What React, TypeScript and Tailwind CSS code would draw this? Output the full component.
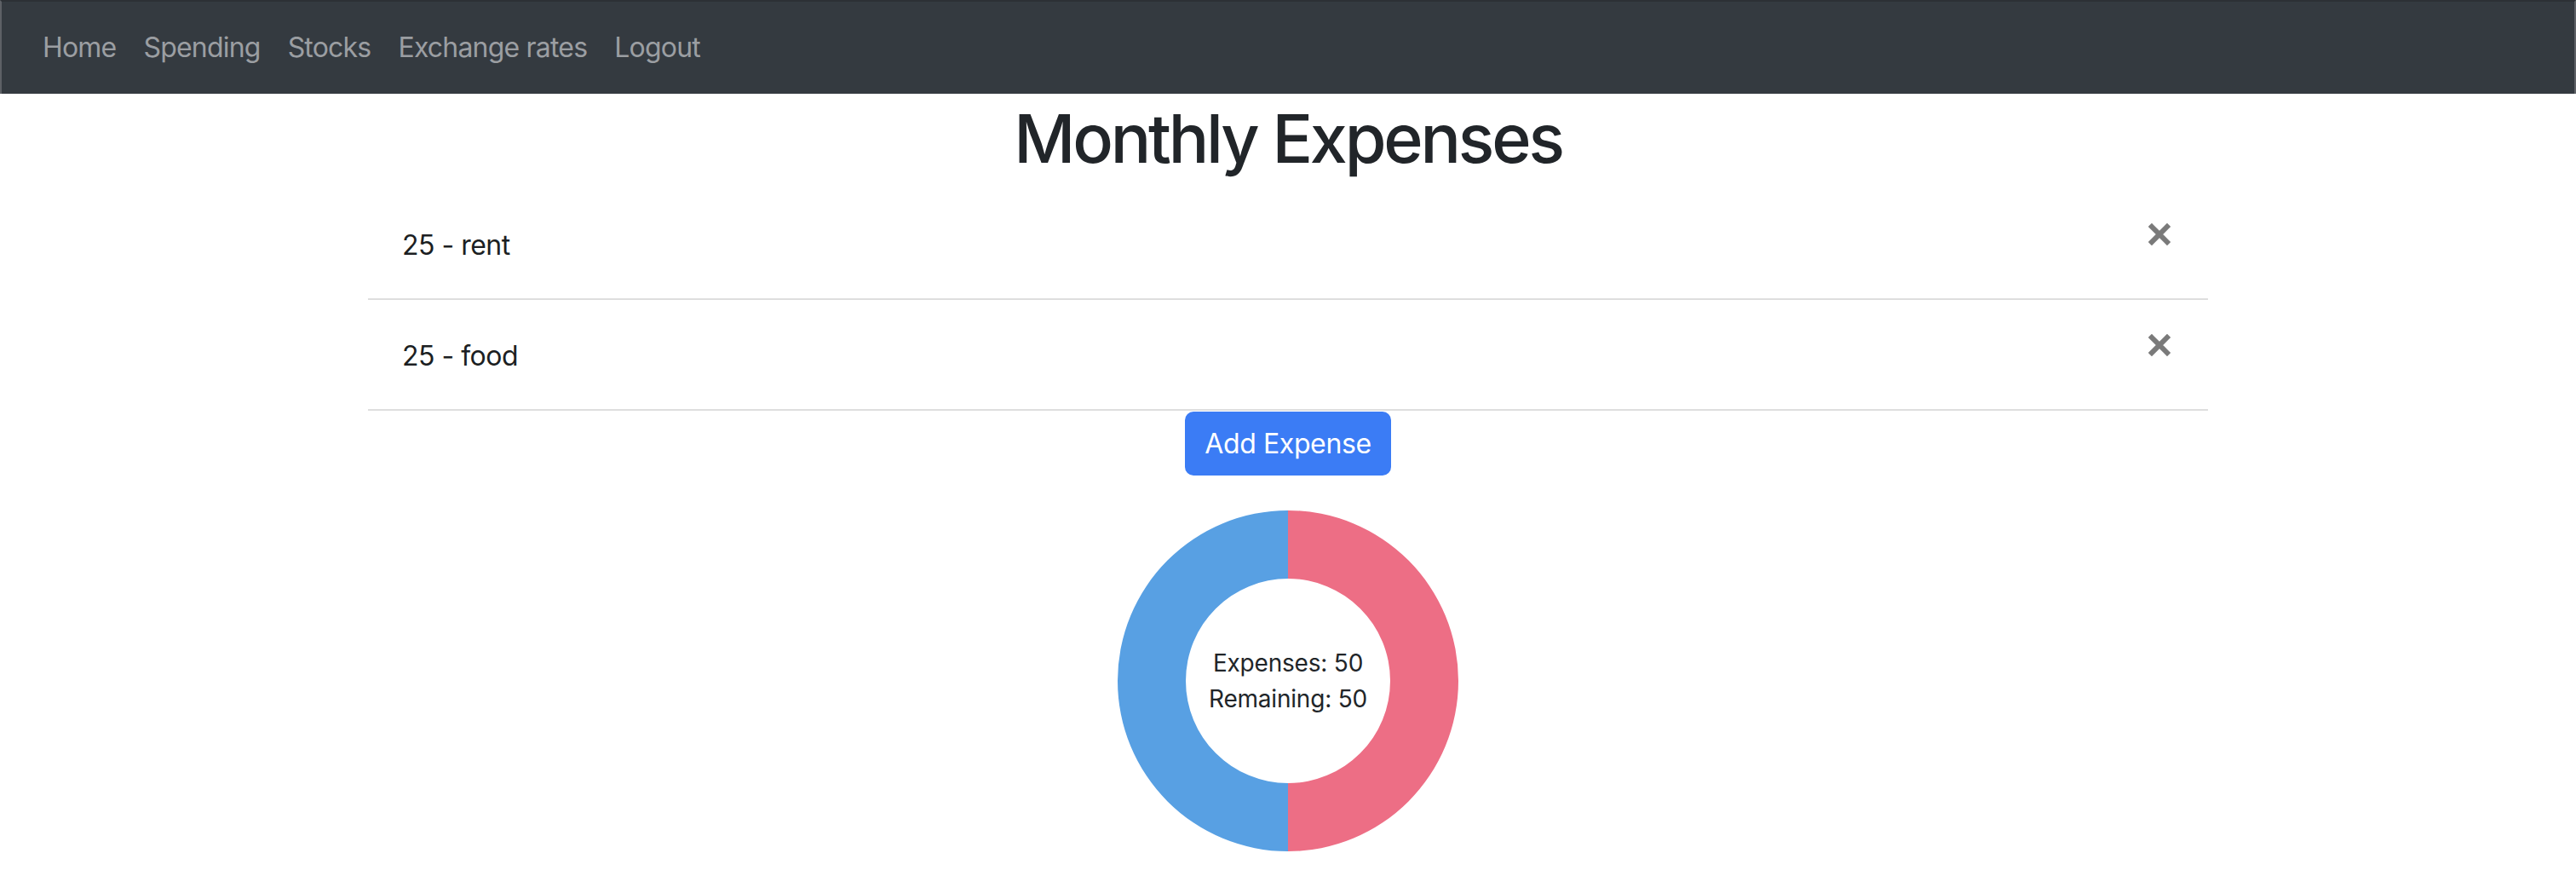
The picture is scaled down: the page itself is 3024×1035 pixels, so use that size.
import React from "react";

const expenses = [
  { id: 1, amount: 25, name: "rent" },
  { id: 2, amount: 25, name: "food" },
];

const navLinks = ["Home", "Spending", "Stocks", "Exchange rates", "Logout"];

const CloseIcon = () => (
  <svg width="26" height="26" viewBox="0 0 26 26" className="block">
    <path d="M4 4 L22 22 M22 4 L4 22" stroke="#7a7a7a" strokeWidth="6" strokeLinecap="square" />
  </svg>
);

const Donut = ({ spent, remaining }: { spent: number; remaining: number }) => {
  return (
    <div className="relative w-[400px] h-[400px]">
      <svg width="400" height="400" viewBox="0 0 400 400">
        {/* right half: expenses, left half: remaining */}
        <path d="M200 0 A200 200 0 0 1 200 400 L200 320 A120 120 0 0 0 200 80 Z" fill="#ed6e85" />
        <path d="M200 400 A200 200 0 0 1 200 0 L200 80 A120 120 0 0 0 200 320 Z" fill="#58a0e3" />
      </svg>
      <div className="absolute inset-0 flex flex-col items-center justify-center text-[28px] leading-[42px] text-[#212529] tracking-[-0.2px]">
        <div>Expenses: {spent}</div>
        <div>Remaining: {remaining}</div>
      </div>
    </div>
  );
};

export default function App() {
  const total = expenses.reduce((s, e) => s + e.amount, 0);

  return (
    <div className="min-h-screen bg-white font-['Inter',sans-serif] text-[#212529]">
      <nav className="h-[110px] bg-[#343a40] flex items-center px-[32px] border-x-2 border-x-[#5d6166] border-t-2 border-t-[#2c3035]">
        {navLinks.map((link) => (
          <a key={link} href="#" className="px-[16px] text-[32px] text-[#9b9ea2] tracking-[-0.8px]">
            {link}
          </a>
        ))}
      </nav>

      <h1 className="mt-[4px] text-center text-[79px] leading-[96px] font-medium tracking-[-3.2px]">
        Monthly Expenses
      </h1>

      <ul className="mt-[12px] mx-auto w-[2160px]">
        {expenses.map((e) => (
          <li key={e.id} className="h-[130px] border-b-2 border-[#dedede] flex justify-between pl-[40px] pr-[44px]">
            <span className="self-center text-[32px] mt-[4px] tracking-[-0.5px] text-[#1c1f23]">
              {e.amount} - {e.name}
            </span>
            <button className="mt-[40px] self-start">
              <CloseIcon />
            </button>
          </li>
        ))}
      </ul>

      <div className="flex justify-center">
        <button className="mt-[1px] w-[242px] h-[75px] rounded-[10px] bg-[#3b7cf5] text-white text-[32px] tracking-[-0.4px]">
          Add Expense
        </button>
      </div>

      <div className="flex justify-center mt-[41px]">
        <Donut spent={total} remaining={100 - total} />
      </div>
    </div>
  );
}
